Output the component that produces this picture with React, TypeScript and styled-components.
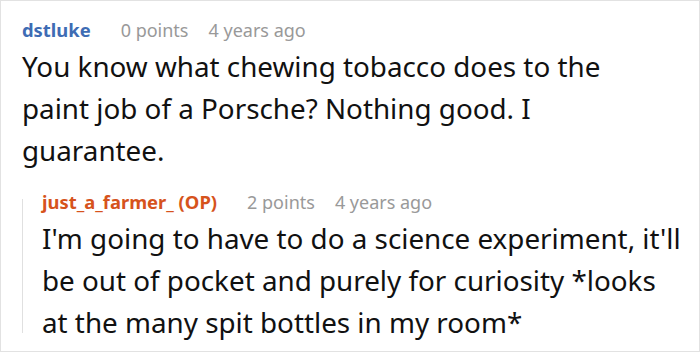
import React from "react";
import styled, { createGlobalStyle } from "styled-components";

const Global = createGlobalStyle`
  html, body { margin: 0; padding: 0; background: #fff; }
  body { font-family: "Noto Sans", "Open Sans", sans-serif; }
`;

const Frame = styled.div`
  box-sizing: border-box;
  width: 700px;
  height: 352px;
  border: 1px solid #e2e2e2;
  padding: 17px 15px 0 21px;
  overflow: hidden;
`;

const Comment = styled.div<{ $inset?: number }>`
  display: flex;
  flex-direction: column;
  flex: 1;
  min-width: 0;
  padding-right: ${(p) => p.$inset ?? 0}px;
`;

const Reply = styled.div`
  display: flex;
  margin-top: 19px;
`;

const Rail = styled.div`
  flex: 0 0 1px;
  margin: 9px 19px 10px 0;
  background: #e0e0e0;
`;

const Header = styled.div`
  display: flex;
  align-items: baseline;
  font-size: 18px;
  line-height: 24px;
  margin-bottom: 3px;
  white-space: nowrap;
`;

const Author = styled.span<{ $op?: boolean }>`
  font-weight: 700;
  font-size: 18.4px;
  margin-right: 30px;
  color: ${(p) => (p.$op ? "#d6531c" : "#3e6cb4")};
`;

const Meta = styled.span`
  color: #999;
  & + & { margin-left: 20px; }
`;

const Body = styled.p`
  margin: 0;
  font-size: 27.8px;
  line-height: 42px;
  color: #111;
`;

export default function App() {
  return (
    <>
      <Global />
      <Frame>
        <Comment $inset={14}>
          <Header>
            <Author>dstluke</Author>
            <Meta>0 points</Meta>
            <Meta>4 years ago</Meta>
          </Header>
          <Body>
            You know what chewing tobacco does to the paint job of a Porsche? Nothing good. I guarantee.
          </Body>
        </Comment>
        <Reply>
          <Rail />
          <Comment>
            <Header>
              <Author $op>just_a_farmer_ (OP)</Author>
              <Meta>2 points</Meta>
              <Meta>4 years ago</Meta>
            </Header>
            <Body>
              I'm going to have to do a science experiment, it'll be out of pocket and purely for curiosity *looks at the many spit bottles in my room*
            </Body>
          </Comment>
        </Reply>
      </Frame>
    </>
  );
}
